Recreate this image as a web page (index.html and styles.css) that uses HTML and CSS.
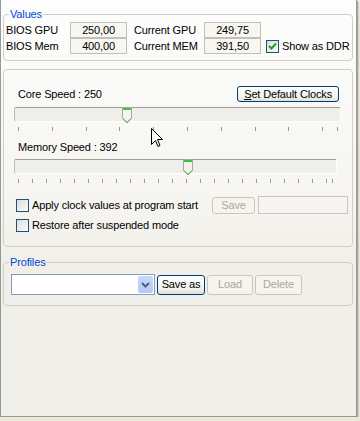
FILE: index.html
```html
<!DOCTYPE html>
<html>
<head>
    <title>Clock Settings</title>
    <link rel="stylesheet" href="styles.css">
</head>
<body>
    <div class="page">
        <fieldset class="group values">
            <legend>Values</legend>
            <div class="vals">
                <span class="lbl">BIOS GPU</span>
                <span class="box">250,00</span>
                <span class="lbl2">Current GPU</span>
                <span class="box">249,75</span>
                <span></span>

                <span class="lbl">BIOS Mem</span>
                <span class="box">400,00</span>
                <span class="lbl2">Current MEM</span>
                <span class="box">391,50</span>
                <label class="check ddr">
                    <span class="cb">
                        <svg width="11" height="11" viewBox="0 0 11 11"><path d="M2 5l2.5 2.5L9 2.5" fill="none" stroke="#21a121" stroke-width="2"/></svg>
                    </span>
                    Show as DDR
                </label>
            </div>
        </fieldset>

        <div class="panel clocks">
            <div class="head">
                <span>Core Speed : 250</span>
                <button class="btn"><u>S</u>et Default Clocks</button>
            </div>
            <div class="track core">
                <span class="thumb" style="left: 107px">
                    <svg width="10" height="17" viewBox="0 0 10 17"><path d="M0.5 0.5h9v11l-4.5 4.5l-4.5-4.5z" fill="#f4f3ee" stroke="#a8a7a0"/><path d="M1 1h8v2H1z" fill="#3bc43b"/><path d="M1 11.5l4 4 4-4" fill="none" stroke="#3bb03b"/></svg>
                </span>
            </div>
            <svg class="ticks" width="330" height="4" id="ticksCore"></svg>

            <div class="head mem">Memory Speed : 392</div>
            <div class="track memtrack">
                <span class="thumb" style="left: 168px">
                    <svg width="10" height="17" viewBox="0 0 10 17"><path d="M0.5 0.5h9v11l-4.5 4.5l-4.5-4.5z" fill="#f4f3ee" stroke="#a8a7a0"/><path d="M1 1h8v2H1z" fill="#3bc43b"/><path d="M1 11.5l4 4 4-4" fill="none" stroke="#3bb03b"/></svg>
                </span>
            </div>
            <svg class="ticks" width="330" height="4" id="ticksMem"></svg>

            <div class="opt first">
                <label class="check apply"><span class="cb"></span>Apply clock values at program start</label>
                <button class="btn small" disabled>Save</button>
                <input class="field" type="text" disabled>
            </div>
            <div class="opt">
                <label class="check"><span class="cb"></span>Restore after suspended mode</label>
            </div>
        </div>

        <fieldset class="group profiles">
            <legend>Profiles</legend>
            <div class="prow">
                <div class="combo">
                    <span class="arrow">
                        <svg width="9" height="6" viewBox="0 0 9 6"><path d="M1 1l3.5 3.5L8 1" fill="none" stroke="#4d6185" stroke-width="2"/></svg>
                    </span>
                </div>
                <button class="btn saveas">Save as</button>
                <button class="btn load" disabled>Load</button>
                <button class="btn del" disabled>Delete</button>
            </div>
        </fieldset>

        <svg class="cursor" width="13" height="21" viewBox="0 0 13 21"><path d="M0.5 0.5V16.5L4.5 12.5L7 18.5L9 17.5L6.5 11.5H11.5Z" fill="#fff" stroke="#000"/></svg>
    </div>

    <script>
        function drawTicks(id, xs) {
            let svg = document.getElementById(id);
            let html = "";
            xs.forEach(function(x) {
                html += '<rect x="' + x + '" y="0" width="1" height="4" fill="#9a9a9a"/>';
            });
            svg.innerHTML = html;
        }

        let core = [];
        for (let i = 0; i < 10; i++) core.push(Math.round(4 + i * 33.8));
        core.push(323);
        drawTicks("ticksCore", core);

        let mem = [];
        for (let i = 0; i < 23; i++) mem.push(Math.round(4 + i * 14));
        mem.push(318);
        drawTicks("ticksMem", mem);
    </script>
</body>
</html>
```

FILE: styles.css
```css
body {
    margin: 0;
    background-color: #ece9d8;
    font-family: "Liberation Sans", Arial, sans-serif;
    font-size: 11px;
    letter-spacing: -0.15px;
    color: #000;
}

.page {
    position: relative;
    box-sizing: border-box;
    width: 357px;
    height: 417px;
    padding-top: 8px;
    border: 1px solid #919b9c;
    border-top: none;
    background: linear-gradient(#fdfdfd, #f6f5f1 200px, #f1efe9 260px);
    box-shadow: 1px 1px 0 #aca899, 2px 2px 0 #d3d1c6;
}

.group {
    margin: 0 3px 0 2px;
    padding: 0 2px 5px;
    border: 1px solid #d0d0bf;
    border-radius: 4px;
    min-width: 0;
}

.group legend {
    margin-left: 3px;
    padding: 0 1px;
    line-height: 13px;
    color: #0046d5;
}

.vals {
    display: grid;
    grid-template-columns: 64px 57px 77px 57px auto;
    grid-auto-rows: 16px;
    margin-top: 1px;
    line-height: 16px;
}

.values {
    padding-bottom: 6px;
}

.lbl2 {
    padding-left: 7px;
}

.box {
    box-sizing: border-box;
    height: 16px;
    border: 1px solid #c3c0b0;
    background-color: #f7f6f2;
    text-align: center;
    line-height: 14px;
}

.check {
    display: flex;
    align-items: center;
    gap: 3px;
    white-space: nowrap;
}

.cb {
    box-sizing: border-box;
    display: flex;
    align-items: center;
    justify-content: center;
    width: 13px;
    height: 13px;
    border: 1px solid #1c5180;
    background: linear-gradient(135deg, #dcdcd7, #fbfbf9);
}

.ddr {
    margin-left: 5px;
}

.panel {
    margin: 8px 3px 0 2px;
    padding-bottom: 12px;
    border: 1px solid #d0d0bf;
    border-radius: 4px;
}

.head {
    display: flex;
    align-items: center;
    justify-content: space-between;
    height: 16px;
    margin-top: 16px;
    padding: 0 13px 0 14px;
}

.head.mem {
    margin-top: 8px;
}

.btn {
    box-sizing: border-box;
    height: 16px;
    padding: 0 6px;
    border: 1px solid #003c74;
    border-radius: 3px;
    background: linear-gradient(#ffffff, #f3f2ec 70%, #e2e0d6);
    font-family: inherit;
    font-size: 11px;
    letter-spacing: inherit;
    line-height: 13px;
    color: #000;
}

.btn u {
    text-decoration: underline;
}

.btn:disabled {
    border-color: #c9c7ba;
    background: #f5f4ee;
    color: #aca899;
}

.track {
    position: relative;
    box-sizing: border-box;
    width: 327px;
    height: 15px;
    margin: 5px 0 0 10px;
    border-top: 1px solid #9d9c96;
    border-left: 1px solid #bdbcb5;
    border-bottom: 1px solid #ffffff;
    border-right: 1px solid #ffffff;
    border-radius: 2px;
    background-color: #efeee8;
}

.track.memtrack {
    width: 323px;
    margin-top: 4px;
}

.thumb {
    position: absolute;
    top: -1px;
    line-height: 0;
}

.ticks {
    display: block;
    margin: 5px 0 0 10px;
}

.opt {
    display: flex;
    align-items: center;
    height: 18px;
    margin-top: 2px;
    padding-left: 12px;
}

.opt.first {
    margin-top: 13px;
}

.apply {
    width: 196px;
}

.btn.small {
    width: 43px;
    height: 17px;
}

.field {
    box-sizing: border-box;
    width: 90px;
    height: 18px;
    margin-left: 3px;
    border: 1px solid #c9c7ba;
    background-color: transparent;
}

.profiles {
    margin-top: 9px;
    padding: 0 2px 10px 7px;
}

.profiles legend {
    margin-left: -2px;
}

.prow {
    display: flex;
    align-items: center;
    gap: 2px;
    margin-top: 5px;
}

.combo {
    box-sizing: border-box;
    display: flex;
    justify-content: flex-end;
    width: 144px;
    height: 21px;
    padding: 1px;
    border: 1px solid #7f9db9;
    background-color: #fff;
}

.arrow {
    display: flex;
    align-items: center;
    justify-content: center;
    width: 15px;
    border-radius: 2px;
    background: linear-gradient(#c9d8fc, #b4c7f5);
}

.prow .btn {
    height: 20px;
    padding: 0;
}

.saveas {
    width: 48px;
}

.load {
    width: 46px;
}

.del {
    width: 47px;
}

.cursor {
    position: absolute;
    left: 150px;
    top: 128px;
}
```
